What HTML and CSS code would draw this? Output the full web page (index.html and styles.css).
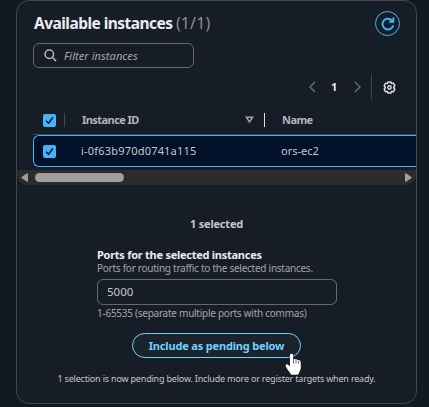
FILE: index.html
```html
<!DOCTYPE html>
<html lang="en">
<head>
<meta charset="utf-8">
<title>Available instances</title>
<link rel="stylesheet" href="styles.css">
</head>
<body>
<main class="card">
  <header class="header">
    <h2 class="title">Available instances <span class="count">(1/1)</span></h2>
    <button class="refresh" aria-label="Refresh">
      <svg width="14" height="14" viewBox="0 0 14 14" fill="none" stroke="currentColor" stroke-width="1.9"><path d="M12.200 8.400a5.400 5.400 0 1 1-1.500-5.200l1.300 1.200"/><path d="M12.400.6v4.200H8.200"/></svg>
    </button>
  </header>
  <div class="filter">
    <svg width="13" height="13" viewBox="0 0 13 13" fill="none" stroke="currentColor" stroke-width="1.5"><circle cx="5.3" cy="5.3" r="4.2"/><path d="M8.3 8.3l3.8 3.8"/></svg>
    <span class="placeholder">Filter instances</span>
  </div>
  <nav class="tools">
    <svg class="prev" width="7" height="12" viewBox="0 0 7 12" fill="none" stroke="currentColor" stroke-width="1.5"><path d="M6 1L1 6l5 5"/></svg>
    <b class="page">1</b>
    <svg class="next" width="7" height="12" viewBox="0 0 7 12" fill="none" stroke="currentColor" stroke-width="1.5"><path d="M1 1l5 5-5 5"/></svg>
    <i class="rule"></i>
    <svg class="gear" width="13" height="13" viewBox="0 0 14 14" fill="none" stroke="currentColor" stroke-width="1.6" stroke-linejoin="round"><path d="M5.400 1h3.200l.6 1.600 1.900-.3 1.600 2.700L11.500 7l1.200 2-1.600 2.700-1.900-.3-.6 1.600H5.400l-.6-1.600-1.900.3L1.300 9l1.200-2-1.200-2 1.600-2.700 1.900.3z"/><circle cx="7" cy="7" r="1.8"/></svg>
  </nav>
  <section class="table">
    <div class="row head">
      <span class="check"><svg width="13" height="13" viewBox="0 0 13 13"><path d="M3 6.700l2.600 2.500 4.300-5.700"/></svg></span>
      <i class="split"></i>
      <span class="cell id">Instance ID</span>
      <svg class="sort" width="9" height="8" viewBox="0 0 9 8" fill="none" stroke="currentColor" stroke-width="1.5"><path d="M1.300 1.200h6.400L4.500 6z"/></svg>
      <i class="split bright"></i>
      <span class="cell name">Name</span>
    </div>
    <div class="row selected">
      <span class="check"><svg width="13" height="13" viewBox="0 0 13 13"><path d="M3 6.700l2.600 2.500 4.300-5.700"/></svg></span>
      <span class="cell id">i-0f63b970d0741a115</span>
      <span class="cell name">ors-ec2</span>
    </div>
  </section>
  <div class="scrollbar">
    <svg width="7" height="9" viewBox="0 0 7 9" fill="currentColor"><path d="M7 .5v8H5.500L0 4.500 5.500.5z"/></svg>
    <i class="thumb"></i>
    <svg class="right" width="7" height="9" viewBox="0 0 7 9" fill="currentColor"><path d="M0 .5v8h1.500L7 4.500 1.500.5z"/></svg>
  </div>
  <p class="summary"><span>1 selected</span></p>
  <form class="ports">
    <label class="label"><span>Ports for the selected instances</span></label>
    <p class="desc"><span>Ports for routing traffic to the selected instances.</span></p>
    <div class="input"><span>5000</span></div>
    <p class="hint"><span>1-65535 (separate multiple ports with commas)</span></p>
  </form>
  <button class="include"><span>Include as pending below</span>
    <svg class="pointer" width="17" height="23" viewBox="0 0 17 23" fill="#fff"><path d="M5 1.500Q6.500-.2 8 1.500V6q1.500-.8 2.300.600 1.500-.9 2.300.700 1.800-.7 2.600.800.6.700.6 2.400v4q0 2.500-1.500 4.500-.3 2.800-2.300 2.800H7q-1.700 0-2-2Q3 17.500.8 13.400.2 12.100 1.300 11.400q1-.4 2.200.7L5 13.600z"/><path d="M8.500 6v4.500M11 7v3.500M13.500 8v2.500" stroke="#39424d" stroke-width=".8"/></svg>
  </button>
  <p class="note"><span>1 selection is now pending below. Include more or register targets when ready.</span></p>
</main>
</body>
</html>
```
FILE: styles.css
```css
* { box-sizing: border-box; }
body {
  margin: 0;
  height: 407px;
  overflow: hidden;
  background: #131920;
  color: #c6c6cd;
  font: 11px/14px "Noto Sans", sans-serif;
}
p, h2 { margin: 0; }
button { font: inherit; padding: 0; }
svg { display: block; flex: none; }
span { white-space: nowrap; }
.card {
  display: flex;
  flex-direction: column;
  width: 401px;
  height: 404px;
  margin-left: 16px;
  border: 1px solid #424650;
  border-radius: 13px;
  background: #171d26;
}
.header {
  display: flex;
  justify-content: space-between;
  align-items: flex-start;
  height: 42px;
  padding: 10px 16px 0 17px;
}
.title { font-size: 15.5px; line-height: 25px; color: #ebebf0; white-space: nowrap; letter-spacing: -.54px; }
.count { font-size: 16px; font-weight: 400; letter-spacing: .1px; color: #8c8c94; }
.refresh {
  display: grid;
  place-items: center;
  width: 25px;
  height: 25px;
  border: 1px solid #42b4ff;
  border-radius: 50%;
  background: none;
  color: #42b4ff;
}
.filter {
  display: flex;
  align-items: center;
  gap: 7px;
  width: 161px;
  height: 25px;
  margin-left: 16px;
  padding-left: 10px;
  border: 1px solid #656871;
  border-radius: 6px;
  color: #b4b4bb;
}
.placeholder { font-style: italic; letter-spacing: .06px; color: #a4a4ad; }
.tools {
  display: flex;
  align-items: center;
  height: 24px;
  margin: 7px 19px 0 292px;
  color: #656871;
}
.page { width: 7px; margin: 0 16px 0 15px; color: #ebebf0; }
.rule { width: 1px; height: 24px; margin-left: 10px; background: #424650; }
.gear { margin-left: 11px; color: #dedee3; }
.table { margin: 3px 0 0 16px; }
.row { display: flex; align-items: center; }
.head { height: 33px; padding: 4px 0 0 10px; font-weight: 700; letter-spacing: -.55px; color: #b4b4bb; border-bottom: 1px solid #424650; }
.selected { height: 32px; padding-left: 9px; border: 1px solid #42b4ff; border-right: 0; border-radius: 6px 0 0 6px; background: #001129; }
.check { width: 13px; height: 13px; border-radius: 2px; background: #42b4ff; }
.check path { fill: none; stroke: #0f141a; stroke-width: 1.5; }
.split { width: 1px; height: 14px; margin-left: 8px; background: #424650; }
.bright { margin-left: 10px; background: #dedee3; }
.head .id { width: 163px; margin-left: 17px; }
.selected .id { width: 174px; margin-left: 25px; letter-spacing: .2px; }
.head .name { margin-left: 17px; }
.selected .name { margin-left: 26px; }
.sort { color: #a4a4ad; }
.scrollbar {
  display: flex;
  align-items: center;
  height: 15px;
  margin-top: 3px;
  padding: 0 4px;
  border-radius: 0 0 11px 11px;
  background: #2c2c2c;
  color: #9f9f9f;
}
.thumb { width: 89px; height: 9px; margin-left: 7px; border-radius: 5px; background: #9f9f9f; }
.right { margin-left: auto; }
.summary { margin-top: 32px; text-align: center; font-weight: 700; letter-spacing: -.2px; }
.ports { width: 240px; margin: 17px 0 0 80px; }
.label { display: block; font-weight: 700; letter-spacing: -.26px; color: #ebebf0; }
.desc, .hint { font-size: 10px; line-height: 13px; letter-spacing: -.26px; color: #a4a4ad; }
.input { height: 26px; margin-top: 4px; padding-left: 9px; border: 1px solid #656871; border-radius: 6px; font-size: 11.5px; line-height: 24px; }
.hint { margin-top: 2px; }
.include {
  position: relative;
  flex: none;
  width: 169px;
  height: 25px;
  margin: 13px 0 0 115px;
  border: 1px solid #75cfff;
  border-radius: 13px;
  background: #1b232d;
  color: #75cfff;
  font-weight: 700;
  letter-spacing: -.17px;
}
.pointer { position: absolute; left: 152px; top: 19px; }
.note { margin-top: 14px; text-align: center; font-size: 9px; letter-spacing: -.19px; }
```
